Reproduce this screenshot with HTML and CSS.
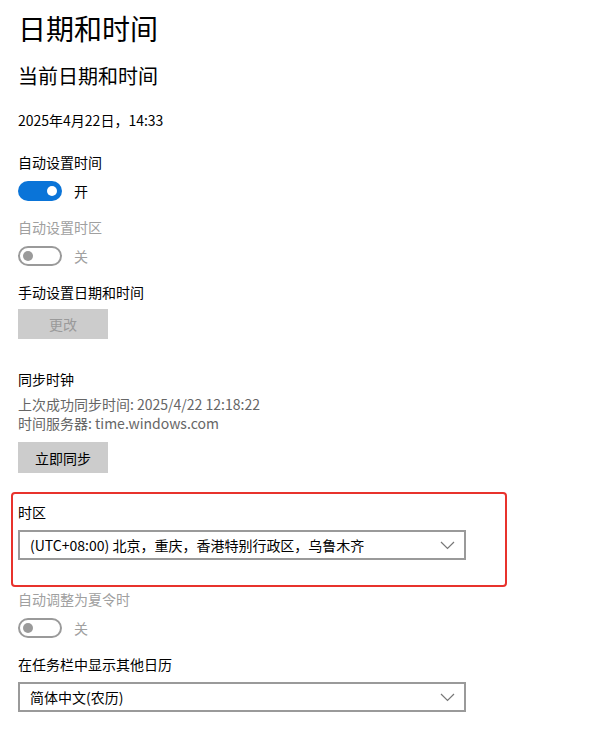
FILE: index.html
```html
<!DOCTYPE html>
<html>
<head>
<meta charset="utf-8">
<title>日期和时间</title>
<link rel="stylesheet" href="styles.css">
</head>
<body>
<h1>日期和时间</h1>
<h2>当前日期和时间</h2>
<p class="now">2025年4月22日，14:33</p>

<div class="label first">自动设置时间</div>
<div class="switch-row">
  <span class="switch on"><span class="knob"></span></span>
  <span class="state">开</span>
</div>

<div class="label muted">自动设置时区</div>
<div class="switch-row">
  <span class="switch off"><span class="knob"></span></span>
  <span class="state muted">关</span>
</div>

<div class="label">手动设置日期和时间</div>
<button class="btn" disabled>更改</button>

<div class="label sync">同步时钟</div>
<div class="info">上次成功同步时间: 2025/4/22 12:18:22</div>
<div class="info">时间服务器: time.windows.com</div>
<button class="btn sync-now">立即同步</button>

<div class="highlight">
  <div class="label">时区</div>
  <div class="select">
    <span>(UTC+08:00) 北京，重庆，香港特别行政区，乌鲁木齐</span>
    <svg class="chev" width="15" height="9" viewBox="0 0 15 9"><path d="M1 1 L7.5 7.5 L14 1" fill="none" stroke="#777" stroke-width="1.2"/></svg>
  </div>
</div>

<div class="label muted dst">自动调整为夏令时</div>
<div class="switch-row">
  <span class="switch off"><span class="knob"></span></span>
  <span class="state muted">关</span>
</div>

<div class="label">在任务栏中显示其他日历</div>
<div class="select">
  <span>简体中文(农历)</span>
  <svg class="chev" width="15" height="9" viewBox="0 0 15 9"><path d="M1 1 L7.5 7.5 L14 1" fill="none" stroke="#777" stroke-width="1.2"/></svg>
</div>
</body>
</html>
```

FILE: styles.css
```css
body { margin: 0; padding: 0 0 0 18px; background: #fff; color: #000;
       font-family: "Noto Sans CJK SC", "Noto Sans", sans-serif; font-size: 14px; line-height: 20px; }

h1 { font-size: 28px; font-weight: normal; line-height: 36px; margin: 10px 0 0 0; }
h2 { font-size: 20px; font-weight: normal; line-height: 28px; margin: 16px 0 0 0; }
p { margin: 0; }
p.now { margin-top: 20px; }

.label { margin-top: 16px; }
.label.first { margin-top: 22px; }
.label.sync { margin-top: 30px; }
.label.dst { margin-top: 2px; }
.muted { color: #a0a0a0; }

.switch-row { display: flex; align-items: center; height: 20px; margin-top: 9px; }
.switch { box-sizing: border-box; width: 44px; height: 20px; border-radius: 10px;
          display: flex; align-items: center; padding: 0 5px; }
.switch .knob { width: 10px; height: 10px; border-radius: 50%; }
.switch.on { background: #0a74d8; justify-content: flex-end; }
.switch.on .knob { background: #fff; }
.switch.off { border: 2px solid #9a9a9a; padding: 0 3px; }
.switch.off .knob { background: #9a9a9a; }
.state { margin-left: 12px; }

.btn { display: block; width: 90px; height: 30px; margin-top: 7px; border: 0; padding: 0;
       background: #cccccc; color: #000; font: inherit; }
.btn:disabled { color: #9a9a9a; }
.btn.sync-now { margin-top: 9px; height: 31px; }

.info { color: #666; line-height: 19px; }
.info:first-of-type { margin-top: 6px; }
.label.sync + .info { margin-top: 6px; }

.highlight { box-sizing: border-box; width: 496px; height: 95px; margin: 19px 0 0 -7px;
             border: 2px solid #e8322c; border-radius: 4px; padding: 8px 0 0 5px; }
.highlight .label { margin-top: 0; }

.select { box-sizing: border-box; width: 448px; height: 30px; margin-top: 8px;
          border: 2px solid #9a9a9a; padding: 0 9px 0 10px;
          display: flex; align-items: center; justify-content: space-between; }
```
